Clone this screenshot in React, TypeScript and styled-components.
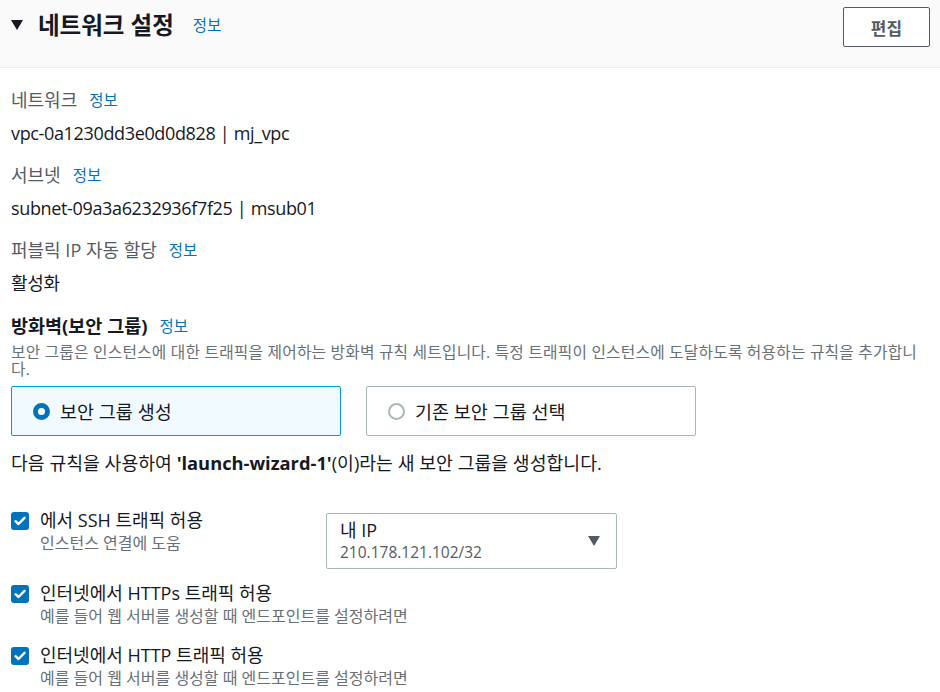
import React from "react";
import styled, { createGlobalStyle } from "styled-components";

const Global = createGlobalStyle`
  html, body { margin: 0; padding: 0; background: #ffffff; }
  body {
    font-family: "Open Sans", "Noto Sans CJK KR", sans-serif;
    color: #16191f;
    -webkit-font-smoothing: antialiased;
  }
  * { box-sizing: border-box; }
`;

const Page = styled.div`
  width: 940px;
  height: 692px;
  overflow: hidden;
  background: #fff;
`;

const Header = styled.header`
  display: flex;
  align-items: flex-start;
  justify-content: space-between;
  height: 68px;
  padding: 7px 10px 0 11px;
  background: #fafafa;
  border-bottom: 1px solid #eaeded;
`;

const TitleRow = styled.div`
  display: flex;
  align-items: center;
  height: 34px;
`;

const Caret = styled.span`
  display: inline-block;
  width: 0;
  height: 0;
  border-left: 6px solid transparent;
  border-right: 6px solid transparent;
  border-top: 10px solid #16191f;
  margin-right: 15px;
  margin-top: 2px;
`;

const Title = styled.h2`
  margin: 0;
  font-size: 23.5px;
  font-weight: 700;
  color: #16191f;
`;

const Info = styled.a<{ $gap?: number }>`
  color: #0073bb;
  font-size: 15.5px;
  font-weight: 400;
  margin-left: ${(p) => p.$gap ?? 12}px;
  text-decoration: none;
  cursor: pointer;
`;

const EditButton = styled.button`
  width: 87px;
  height: 40px;
  border: 1px solid #545b64;
  border-radius: 2px;
  background: #fff;
  color: #545b64;
  font-family: inherit;
  font-size: 17px;
  font-weight: 700;
  cursor: pointer;
`;

const Body = styled.div`
  padding: 20px 12px 0 11px;
  display: flex;
  flex-direction: column;
`;

const Field = styled.div<{ $mb: number }>`
  display: flex;
  flex-direction: column;
  gap: 9px;
  margin-bottom: ${(p) => p.$mb}px;
`;

const Label = styled.div`
  display: flex;
  align-items: center;
  font-size: 18px;
  line-height: 24px;
  color: #545b64;
`;

const Value = styled.div`
  font-size: 18px;
  line-height: 24px;
  letter-spacing: -0.35px;
  color: #16191f;
`;

const SectionHeading = styled.div`
  display: flex;
  align-items: center;
  font-size: 18.5px;
  line-height: 22px;
  font-weight: 700;
  color: #16191f;
`;

const Description = styled.p`
  margin: 7px 0 8px;
  font-size: 15.75px;
  line-height: 17px;
  color: #687078;
  letter-spacing: 0.2px;
`;

const Tiles = styled.div`
  display: flex;
  gap: 25px;
`;

const Tile = styled.label<{ $selected?: boolean }>`
  display: flex;
  align-items: center;
  gap: 10px;
  width: 330px;
  height: 50px;
  padding-left: 21px;
  border: 1px solid ${(p) => (p.$selected ? "#00a1c9" : "#aab7b8")};
  border-radius: 2px;
  background: ${(p) => (p.$selected ? "#f1faff" : "#fff")};
  font-size: 18.5px;
  color: #16191f;
  cursor: pointer;
`;

const Radio = styled.span<{ $checked?: boolean }>`
  width: 17px;
  height: 17px;
  border-radius: 50%;
  flex: none;
  ${(p) =>
    p.$checked
      ? `border: 5px solid #0073bb; background: #fff;`
      : `border: 2px solid #aab7b8; background: #fff;`}
`;

const Sentence = styled.div`
  margin-top: 15px;
  font-size: 18.3px;
  line-height: 24px;
  color: #16191f;
`;

const Strong = styled.b`
  font-weight: 700;
`;

const Rules = styled.div`
  margin-top: 33px;
  display: flex;
  flex-direction: column;
`;

const RuleRow = styled.div<{ $mb: number }>`
  display: flex;
  align-items: flex-start;
  margin-bottom: ${(p) => p.$mb}px;
`;

const CheckBox = styled.span`
  width: 18px;
  height: 18px;
  margin-top: 4px;
  margin-right: 11px;
  border-radius: 3px;
  background: #0073bb;
  display: flex;
  align-items: center;
  justify-content: center;
  flex: none;
`;

const RuleText = styled.div<{ $width?: number }>`
  width: ${(p) => (p.$width ? `${p.$width}px` : "auto")};
  display: flex;
  flex-direction: column;
`;

const RuleLabel = styled.div`
  font-size: 18px;
  line-height: 24px;
  color: #16191f;
`;

const RuleHint = styled.div`
  font-size: 16px;
  line-height: 20px;
  color: #687078;
  margin-top: 1px;
`;

const Select = styled.div`
  width: 291px;
  height: 56px;
  margin-top: 5px;
  border: 1px solid #aab7b8;
  border-radius: 2px;
  display: flex;
  align-items: center;
  justify-content: space-between;
  padding: 0 16px 0 13px;
`;

const SelectText = styled.div`
  display: flex;
  flex-direction: column;
  gap: 1px;
`;

const SelectMain = styled.div`
  font-size: 18px;
  line-height: 21px;
  color: #16191f;
`;

const SelectSub = styled.div`
  font-size: 15.5px;
  line-height: 20px;
  color: #545b64;
`;

const SelectCaret = styled.span`
  width: 0;
  height: 0;
  border-left: 6px solid transparent;
  border-right: 6px solid transparent;
  border-top: 10px solid #545b64;
`;

const Check = () => (
  <svg width="12" height="10" viewBox="0 0 12 10" fill="none">
    <path d="M1.5 5.2 L4.5 8 L10.5 1.8" stroke="#fff" strokeWidth="2.4" strokeLinecap="round" strokeLinejoin="round" />
  </svg>
);

export default function App() {
  return (
    <Page>
      <Global />
      <Header>
        <TitleRow>
          <Caret />
          <Title>네트워크 설정</Title>
          <Info $gap={19}>정보</Info>
        </TitleRow>
        <EditButton>편집</EditButton>
      </Header>
      <Body>
        <Field $mb={18}>
          <Label>
            네트워크<Info>정보</Info>
          </Label>
          <Value>vpc-0a1230dd3e0d0d828 | mj_vpc</Value>
        </Field>
        <Field $mb={18}>
          <Label>
            서브넷<Info>정보</Info>
          </Label>
          <Value>subnet-09a3a6232936f7f25 | msub01</Value>
        </Field>
        <Field $mb={20}>
          <Label>
            퍼블릭 IP 자동 할당<Info>정보</Info>
          </Label>
          <Value>활성화</Value>
        </Field>
        <SectionHeading>
          방화벽(보안 그룹)<Info>정보</Info>
        </SectionHeading>
        <Description>
          보안 그룹은 인스턴스에 대한 트래픽을 제어하는 방화벽 규칙 세트입니다. 특정 트래픽이 인스턴스에 도달하도록 허용하는 규칙을 추가합니다.
        </Description>
        <Tiles>
          <Tile $selected>
            <Radio $checked />
            보안 그룹 생성
          </Tile>
          <Tile>
            <Radio />
            기존 보안 그룹 선택
          </Tile>
        </Tiles>
        <Sentence>
          다음 규칙을 사용하여 <Strong>'launch-wizard-1'</Strong>(이)라는 새 보안 그룹을 생성합니다.
        </Sentence>
        <Rules>
          <RuleRow $mb={12}>
            <CheckBox>
              <Check />
            </CheckBox>
            <RuleText $width={286}>
              <RuleLabel>에서 SSH 트래픽 허용</RuleLabel>
              <RuleHint>인스턴스 연결에 도움</RuleHint>
            </RuleText>
            <Select>
              <SelectText>
                <SelectMain>내 IP</SelectMain>
                <SelectSub>210.178.121.102/32</SelectSub>
              </SelectText>
              <SelectCaret />
            </Select>
          </RuleRow>
          <RuleRow $mb={17}>
            <CheckBox>
              <Check />
            </CheckBox>
            <RuleText>
              <RuleLabel>인터넷에서 HTTPs 트래픽 허용</RuleLabel>
              <RuleHint>예를 들어 웹 서버를 생성할 때 엔드포인트를 설정하려면</RuleHint>
            </RuleText>
          </RuleRow>
          <RuleRow $mb={0}>
            <CheckBox>
              <Check />
            </CheckBox>
            <RuleText>
              <RuleLabel>인터넷에서 HTTP 트래픽 허용</RuleLabel>
              <RuleHint>예를 들어 웹 서버를 생성할 때 엔드포인트를 설정하려면</RuleHint>
            </RuleText>
          </RuleRow>
        </Rules>
      </Body>
    </Page>
  );
}
